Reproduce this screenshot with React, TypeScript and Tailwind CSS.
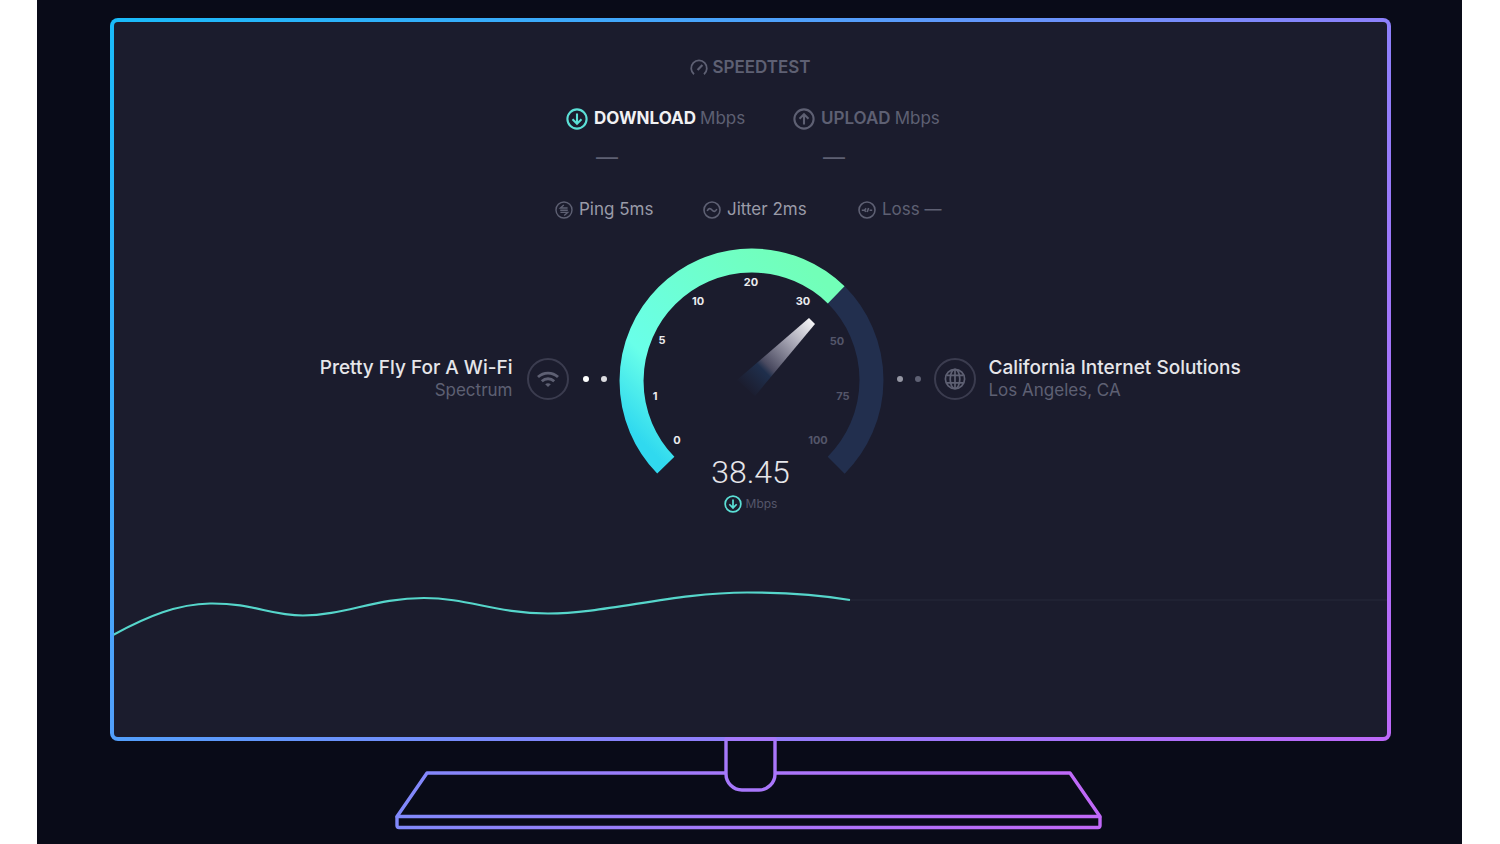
import { ReactNode } from "react";

type IconProps = { className?: string }

type Mark = {
    value: number
    x: number
    y: number
    active: boolean
}

const marks: Mark[] = [
    { value: 0, x: 58, y: 192, active: true },
    { value: 1, x: 36, y: 148, active: true },
    { value: 5, x: 43, y: 92, active: true },
    { value: 10, x: 79, y: 53, active: true },
    { value: 20, x: 132, y: 34, active: true },
    { value: 30, x: 184, y: 53, active: true },
    { value: 50, x: 218, y: 93, active: false },
    { value: 75, x: 224, y: 148, active: false },
    { value: 100, x: 199, y: 192, active: false },
]

function ArrowIcon({ className, up = false }: IconProps & { up?: boolean }) {
    return (
        <svg className={className} viewBox="0 0 22 22" fill="none" stroke="currentColor" strokeWidth="2.1">
            <circle cx="11" cy="11" r="9.6" />
            <path d={up ? "M11 16.500V6.500M6.500 10.700 11 6.200l4.500 4.500" : "M11 5.500v10M6.500 11.300l4.500 4.500 4.500-4.500"} />
        </svg>
    )
}

function LogoIcon({ className }: IconProps) {
    return (
        <svg className={className} viewBox="0 0 18 18" fill="none" stroke="currentColor" strokeWidth="1.8">
            <path d="M4 15.200a7.800 7.800 0 1 1 10 0" />
            <path d="m7.600 11 4.800-5" strokeWidth="2.2" />
        </svg>
    )
}

function PingIcon({ className }: IconProps) {
    return (
        <svg className={className} viewBox="0 0 18 18" fill="none" stroke="currentColor" strokeWidth="1.4">
            <circle cx="9" cy="9" r="8" />
            <path d="M12.600 7H5.400l3.400-3M5.200 9.200h7.600M5.400 11.400h7.200l-3.400 3" />
        </svg>
    )
}

function JitterIcon({ className }: IconProps) {
    return (
        <svg className={className} viewBox="0 0 18 18" fill="none" stroke="currentColor" strokeWidth="1.6">
            <circle cx="9" cy="9" r="8" />
            <path d="M4.200 10C5.600 7 7.400 7 9 9s3.400 2 4.800-1" />
        </svg>
    )
}

function LossIcon({ className }: IconProps) {
    return (
        <svg className={className} viewBox="0 0 18 18" fill="none" stroke="currentColor" strokeWidth="1.6">
            <circle cx="9" cy="9" r="8" />
            <path d="M3.800 9.200h2.600l1.800-1.800M6.600 9.400l1.400 1.400M9.200 11l1.400-4M11.600 9.200H14.200" />
        </svg>
    )
}

function WifiIcon({ className }: IconProps) {
    return (
        <svg className={className} viewBox="0 0 22 16" fill="none" stroke="currentColor" strokeWidth="2.8">
            <path d="M1 6C6.600.7 15.400.7 21 6" />
            <path d="M4.800 10.200c3.600-3.300 8.800-3.300 12.400 0" />
            <path d="M11 16 8.200 13.200c1.600-1.400 4-1.400 5.600 0z" fill="currentColor" stroke="none" />
        </svg>
    )
}

function GlobeIcon({ className }: IconProps) {
    return (
        <svg className={className} viewBox="0 0 22 22" fill="none" stroke="currentColor" strokeWidth="1.7">
            <circle cx="11" cy="11" r="9.6" />
            <ellipse cx="11" cy="11" rx="4.800" ry="9.6" />
            <path d="M11 1.400v19.200M2.600 7.400h16.800M2.600 14.800h16.800" />
        </svg>
    )
}

function Stat({ icon, children }: { icon: ReactNode, children: ReactNode }) {
    return (
        <div className="flex items-center gap-1.5 whitespace-nowrap">
            {icon}
            {children}
        </div>
    )
}

function Gauge() {
    return (
        <div className="grid w-[264px]">
            <svg className="col-start-1 row-start-1 size-[264px] overflow-visible" viewBox="0 0 264 264">
                <defs>
                    <linearGradient id="arc" gradientUnits="userSpaceOnUse" x1="46" y1="217" x2="217" y2="46">
                        <stop offset="0" stopColor="#30d9ef" />
                        <stop offset="0.26" stopColor="#69ffe9" />
                        <stop offset="0.8" stopColor="#70ffc4" />
                        <stop offset="1" stopColor="#72ffb8" />
                    </linearGradient>
                    <linearGradient id="needle" gradientUnits="userSpaceOnUse" x1="193" y1="73" x2="125" y2="141">
                        <stop offset="0" stopColor="#f4f4f6" />
                        <stop offset="0.3" stopColor="#a9a8b6" />
                        <stop offset="0.65" stopColor="#4a4a60" />
                        <stop offset="0.72" stopColor="#1f2f4c" />
                        <stop offset="1" stopColor="#1b1c2d" />
                    </linearGradient>
                </defs>
                <path d="M217.200 46.800a120.500 120.500 0 0 1 0 170.400" fill="none" stroke="#222f4e" strokeWidth="24" />
                <path d="M46.800 217.200A120.500 120.500 0 0 1 217.200 46.800" fill="none" stroke="url(#arc)" strokeWidth="24" />
                <path d="m190 70 6 6-60 72-18-16z" fill="url(#needle)" />
                {marks.map((mark) => (
                    <text
                        key={mark.value}
                        x={mark.x}
                        y={mark.y + 4}
                        textAnchor="middle"
                        className={mark.active ? "fill-[#ebebee] text-[11px] font-bold" : "fill-[#54566a] text-[11px] font-bold"}
                    >
                        {mark.value}
                    </text>
                ))}
            </svg>
            <div className="col-start-1 row-start-1 flex flex-col items-center self-end">
                <strong className="font-[Roboto,sans-serif] text-[32px] leading-12 font-light text-[#e6e6ea]">38.45</strong>
                <span className="flex h-4 items-center gap-1 text-xs text-[#54566a]">
                    <ArrowIcon className="size-[18px] text-[#5be0d6]" />
                    Mbps
                </span>
            </div>
        </div>
    )
}

function Graph() {
    return (
        <svg className="block h-[60px] w-full" viewBox="0 0 1273 60" preserveAspectRatio="none" fill="none">
            <path d="M736 20H1273" stroke="#232436" strokeWidth="1.500" />
            <path
                d="M-1 55C34 36 64 24 96 23.500C140 23 155 35.500 189 35.500C230 35.500 262 18 310 18C354 18 382 33.500 434 33.500C492 33.500 560 12.500 633 12.500C674 12.500 706 15 736 20"
                stroke="#56d6cb"
                strokeWidth="2.2"
            />
        </svg>
    )
}

function Stand() {
    return (
        <svg className="mx-auto -mt-1 block h-[94px] w-[708px] overflow-visible" viewBox="2 0 708 94" fill="none" stroke="url(#stand)" strokeWidth="3.4" strokeLinejoin="round">
            <defs>
                <linearGradient id="stand" gradientUnits="userSpaceOnUse" x1="0" y1="0" x2="708" y2="0">
                    <stop offset="0" stopColor="#8089fb" />
                    <stop offset="0.5" stopColor="#a877fb" />
                    <stop offset="1" stopColor="#c168f8" />
                </linearGradient>
            </defs>
            <path d="M331 36H32L2 79.500H705L675 36H380" />
            <path d="M2 79.500V88.500q0 2 2 2H703q2 0 2-2V79.500" />
            <path d="M331 2V37a16 16 0 0 0 16 16h17a16 16 0 0 0 16-16V2z" />
        </svg>
    )
}

export default function App() {
    return (
        <div className="min-h-screen bg-white pr-[38px] pl-[37px] font-[Inter,sans-serif] text-[#5e6073]">
            <main className="min-h-screen bg-[#090b18] pt-[18px] pr-[71px] pl-[73px]">
                <div className="rounded-lg bg-[linear-gradient(135deg,#19bbf9,#529ffb_36%,#8d80fb_64%,#bd68f8)] p-1">
                    <div className="flex flex-col rounded-sm bg-[#1b1c2d] pt-[33px] pb-[97px]">
                        <h1 className="flex h-[26px] items-center justify-center gap-1 text-[17px] font-semibold">
                            <LogoIcon className="size-[18px]" />
                            SPEEDTEST
                        </h1>

                        <section className="mt-[26px] grid grid-cols-[227px_142px] justify-center text-[17px]">
                            <div>
                                <h2 className="flex h-6 items-center gap-1">
                                    <ArrowIcon className="mr-0.5 size-[22px] shrink-0 text-[#5be0d6]" />
                                    <span className="font-bold text-[#f1f1f3]">DOWNLOAD</span>
                                    Mbps
                                </h2>
                                <p className="mt-3.5 ml-[30px] h-[26px] text-[22px] leading-6">—</p>
                            </div>
                            <div>
                                <h2 className="flex h-6 items-center gap-1">
                                    <ArrowIcon className="mr-0.5 size-[22px] shrink-0" up />
                                    <span className="font-semibold">UPLOAD</span>
                                    Mbps
                                </h2>
                                <p className="mt-3.5 ml-[30px] h-[26px] text-[22px] leading-6">—</p>
                            </div>
                        </section>

                        <section className="mt-[26px] grid h-6 grid-cols-[148px_155px_88px] items-center justify-center text-[17px]">
                            <Stat icon={<PingIcon className="size-[18px]" />}>
                                <span className="text-[#9a9ba8]">Ping 5ms</span>
                            </Stat>
                            <Stat icon={<JitterIcon className="size-[18px]" />}>
                                <span className="text-[#9a9ba8]">Jitter 2ms</span>
                            </Stat>
                            <Stat icon={<LossIcon className="size-[18px]" />}>Loss —</Stat>
                        </section>

                        <section className="mt-[27px] grid grid-cols-[1fr_auto_1fr] items-center gap-3">
                            <div className="flex items-center justify-end gap-3.5 pb-0.5">
                                <div className="text-right">
                                    <p className="text-[19px] leading-[22px] font-medium text-[#e6e6ea]">Pretty Fly For A Wi-Fi</p>
                                    <p className="text-[17px] leading-[22px]">Spectrum</p>
                                </div>
                                <span className="flex size-[42px] items-center justify-center rounded-full border-2 border-[#3b3c4f]">
                                    <WifiIcon className="h-4 w-[22px]" />
                                </span>
                                <span className="flex gap-3">
                                    <i className="size-1.5 rounded-full bg-white" />
                                    <i className="size-1.5 rounded-full bg-[#dcdce0]" />
                                </span>
                            </div>

                            <Gauge />

                            <div className="flex items-center gap-[13px] pb-0.5 pl-0.5">
                                <span className="flex gap-3">
                                    <i className="size-1.5 rounded-full bg-[#9596a3]" />
                                    <i className="size-1.5 rounded-full bg-[#5e6073]" />
                                </span>
                                <span className="flex size-[42px] items-center justify-center rounded-full border-2 border-[#3b3c4f]">
                                    <GlobeIcon className="size-[22px]" />
                                </span>
                                <div>
                                    <p className="text-[19px] leading-[22px] font-medium text-[#e6e6ea]">California Internet Solutions</p>
                                    <p className="text-[17px] leading-[22px]">Los Angeles, CA</p>
                                </div>
                            </div>
                        </section>

                        <div className="mt-[68px]">
                            <Graph />
                        </div>
                    </div>
                </div>
                <Stand />
            </main>
        </div>
    )
}
